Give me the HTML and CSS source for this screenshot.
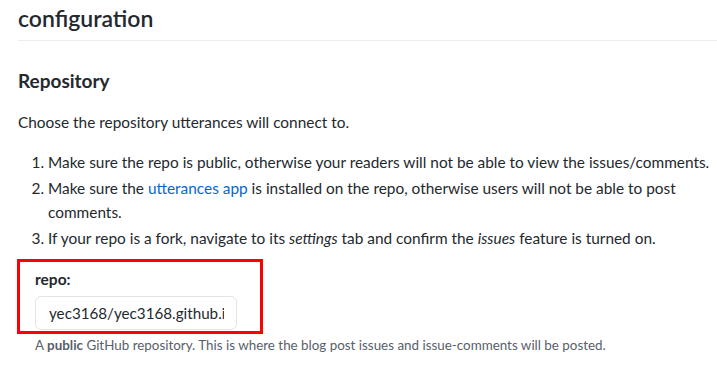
FILE: index.html
```html
<!DOCTYPE html>
<html lang="en">

<head>
    <meta charset="UTF-8">
    <meta name="viewport" content="width=device-width, initial-scale=1.0">
    <title>utterances configuration</title>
    <link rel="stylesheet" href="styles.css">
</head>

<body>
    <article class="markdown">
        <h1>configuration</h1>

        <h2>Repository</h2>
        <p>Choose the repository utterances will connect to.</p>
        <ol>
            <li>Make sure the repo is public, otherwise your readers will not be able to view the issues/comments.</li>
            <li>Make sure the <a href="#">utterances app</a> is installed on the repo, otherwise users will not be able to post comments.</li>
            <li>If your repo is a fork, navigate to its <em>settings</em> tab and confirm the <em>issues</em> feature is turned on.</li>
        </ol>

        <form class="config-form">
            <div class="field-box">
                <label for="repo">repo:</label>
                <input type="text" id="repo" name="repo" class="form-control" value="yec3168/yec3168.github.io">
            </div>
            <p class="note">A <strong>public</strong> GitHub repository. This is where the blog post issues and issue-comments will be posted.</p>
        </form>
    </article>
</body>

</html>
```
FILE: styles.css
```css
* {
    margin: 0;
    padding: 0;
    box-sizing: border-box;
}

html {
    background-color: #ffffff;
    color: #24292e;
    font-family: 'Lato', 'Arial', sans-serif;
    font-size: 15.4px;
}

body {
    overflow: hidden;
}

.markdown {
    padding: 2px 0 0 18px;
}

h1 {
    font-size: 23px;
    font-weight: 600;
    line-height: 32px;
    padding-bottom: 6px;
    border-bottom: 1px solid #eaecef;
}

h2 {
    font-size: 19px;
    font-weight: 700;
    line-height: 25px;
    margin-top: 27px;
}

p {
    line-height: 24px;
    margin-top: 17px;
}

ol {
    margin-top: 16px;
    padding-left: 30px;
}

li {
    line-height: 24px;
}

li + li {
    margin-top: 2px;
}

a {
    color: #0366d6;
    text-decoration: none;
}

.config-form {
    margin-top: 9px;
}

.field-box {
    width: 246px;
    margin-left: -1px;
    padding: 7px 23px 1px 15px;
    border: 3px solid #ff0000;
}

label {
    display: block;
    font-size: 15.5px;
    font-weight: 700;
    line-height: 21px;
}

.form-control {
    display: block;
    width: 202px;
    height: 34px;
    margin-top: 6px;
    padding: 0 12px 0 13px;
    border: 1px solid #e1e4e8;
    border-radius: 6px;
    color: #24292e;
    font-family: 'Lato', 'Arial', sans-serif;
    font-size: 15.2px;
    outline: none;
}

.note {
    margin: 1px 0 0 17px;
    font-size: 13.4px;
    line-height: 20px;
    color: #586069;
}
```
